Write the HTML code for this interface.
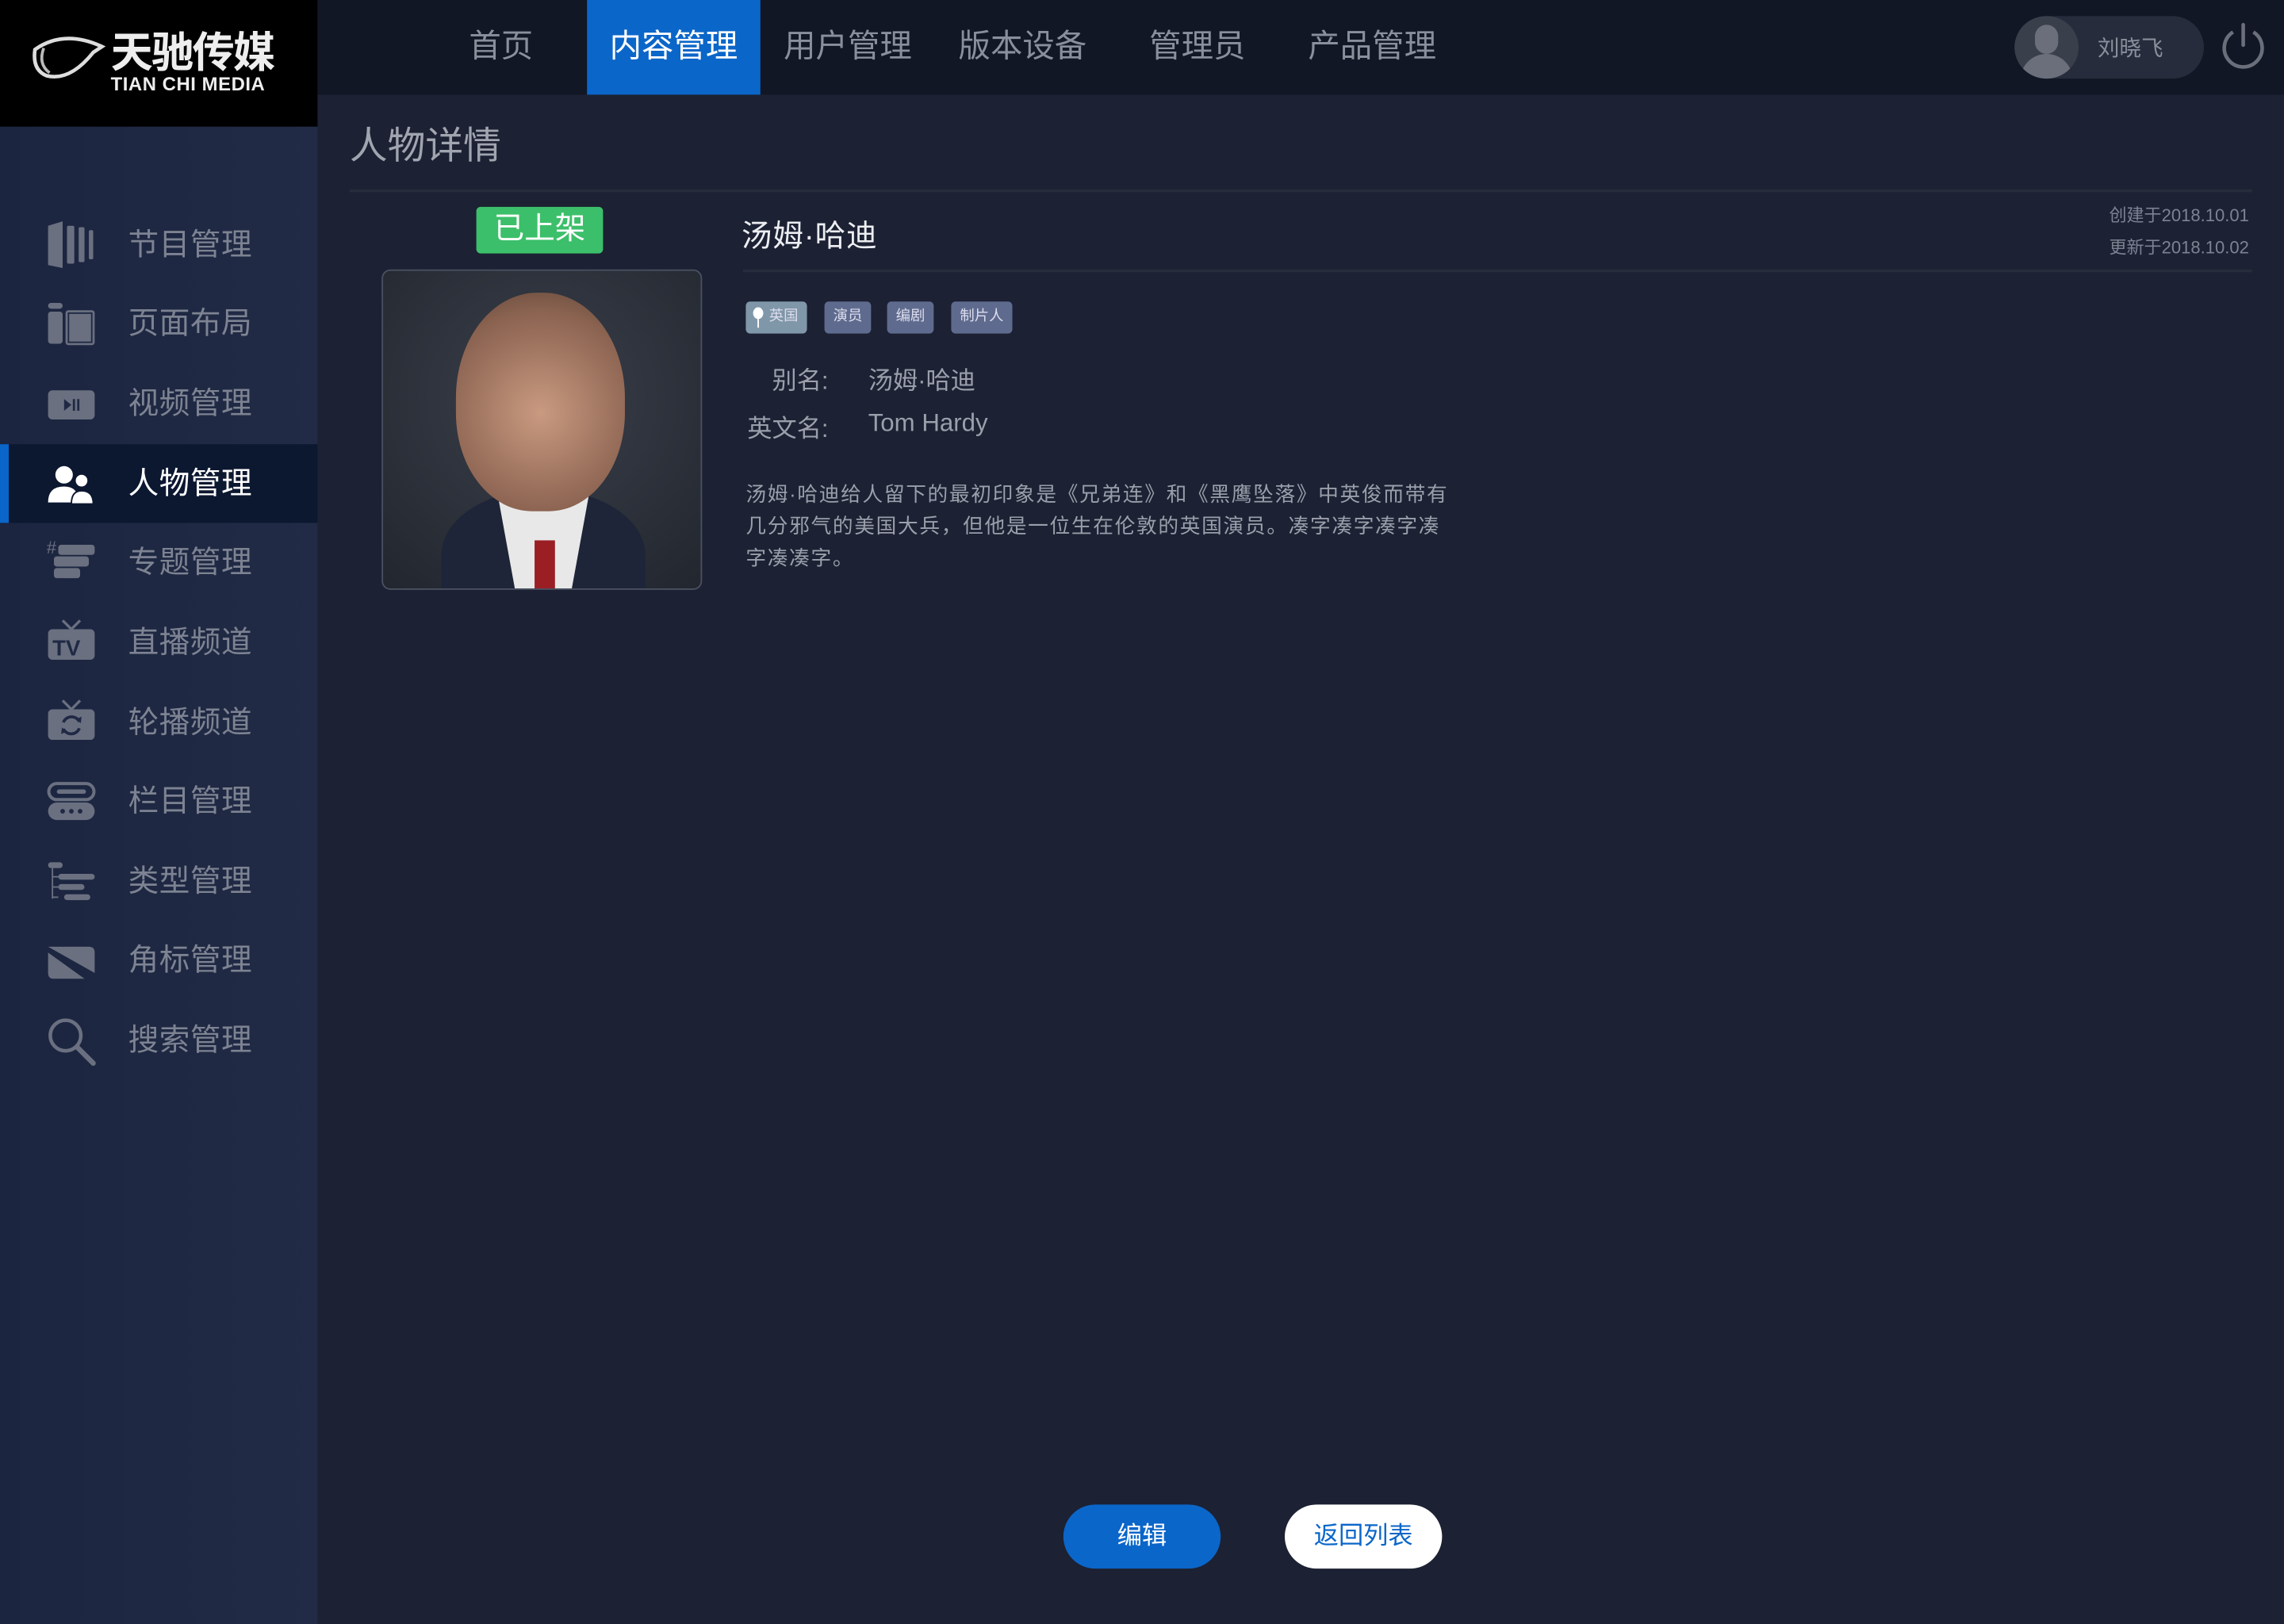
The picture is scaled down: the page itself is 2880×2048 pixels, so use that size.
<!DOCTYPE html>
<html><head><meta charset="utf-8"><style>
*{margin:0;padding:0;box-sizing:border-box}
html,body{width:2880px;height:2048px;overflow:hidden;background:#1c2133}
#w{position:absolute;left:0;top:0;width:1568px;height:1115px;transform:scale(1.836735);transform-origin:0 0;font-family:"Liberation Sans","Noto Sans CJK SC",sans-serif;background:#1c2133;color:#9a9fab}
.abs{position:absolute}
#logo{left:0;top:0;width:218px;height:87px;background:#000}
#side{left:0;top:87px;width:218px;height:1028px;background:linear-gradient(90deg,#1b2540,#212b45)}
#top{left:218px;top:0;width:1350px;height:65px;background:#111725}
.nav{position:absolute;top:0;height:65px;line-height:64px;font-size:22px;color:#8a8f9c;text-align:center}
.mi{position:absolute;left:0;width:218px;height:54px;}
.mi span{position:absolute;left:88px;top:11px;font-size:21px;color:#7d8392;letter-spacing:0.3px}
.mi svg{position:absolute;left:32px;top:10px}
.tag{position:absolute;top:207px;height:22px;border-radius:3px;background:#5f6b8e;color:#dde;font-size:10px;line-height:22px;padding:0 6px}
</style></head><body><div id="w">
<div id="logo" class="abs">
<svg class="abs" style="left:20px;top:22px" width="54" height="40" viewBox="0 0 54 40"><path d="M4 12 Q24 -2 50 10 L44 14 Q28 34 12 30 Q2 26 4 12Z" fill="none" stroke="#ddd" stroke-width="2.5"/><path d="M10 11 Q6 22 14 28" fill="none" stroke="#bbb" stroke-width="2"/></svg>
<div class="abs" style="left:76px;top:20px;color:#eee;font-size:29px;font-weight:bold;letter-spacing:-1px;line-height:34px">天驰传媒</div>
<div class="abs" style="left:76px;top:51px;color:#eee;font-size:13px;line-height:14px;letter-spacing:0.3px;font-weight:bold">TIAN CHI MEDIA</div>
</div>
<div id="side" class="abs">
<div class="mi" style="top:54px"><svg width="34" height="34" viewBox="0 0 34 34"><path d="M1 4 L11 1 V33 L1 31Z" fill="#6a7080"/><rect x="14" y="4" width="5" height="26" rx="1" fill="#6a7080"/><rect x="22" y="5" width="4" height="24" rx="1" fill="#6a7080"/><rect x="29" y="7" width="3" height="20" rx="1" fill="#6a7080"/></svg><span>节目管理</span></div>
<div class="mi" style="top:108px"><svg width="34" height="34" viewBox="0 0 34 34"><rect x="1" y="3" width="10" height="4" rx="2" fill="#6a7080"/><rect x="1" y="9" width="10" height="22" rx="2" fill="#6a7080"/><rect x="13" y="8" width="20" height="24" rx="2" fill="#6a7080"/><rect x="15" y="10" width="16" height="20" fill="none" stroke="#1f2944" stroke-width="1"/></svg><span>页面布局</span></div>
<div class="mi" style="top:163px"><svg width="34" height="34" viewBox="0 0 34 34"><rect x="1" y="8" width="32" height="20" rx="3" fill="#6a7080"/><path d="M12 14 L17 18 L12 22Z M18 14h1.5v8H18z M21 14h1.5v8H21z" fill="#1f2944"/></svg><span>视频管理</span></div>
<div class="mi" style="top:218px;background:#0c1730"><div class="abs" style="left:0;top:0;width:6px;height:54px;background:#0a66c8"></div><svg width="34" height="34" viewBox="0 0 34 34"><circle cx="12" cy="11" r="6" fill="#fff"/><path d="M1 30 Q1 19 12 19 Q22 19 22 30Z" fill="#fff"/><circle cx="24" cy="15" r="4.5" fill="#fff" stroke="#0c1730"/><path d="M17 31 Q17 22 24 22 Q32 22 32 31Z" fill="#fff" stroke="#0c1730"/></svg><span style="color:#fff">人物管理</span></div>
<div class="mi" style="top:272px"><svg width="34" height="34" viewBox="0 0 34 34"><text x="0" y="11" font-size="12" fill="#6a7080" font-family="Liberation Sans">#</text><rect x="8" y="5" width="25" height="7" rx="2" fill="#6a7080"/><rect x="5" y="13" width="24" height="7" rx="2" fill="#6a7080"/><rect x="5" y="21" width="18" height="7" rx="2" fill="#6a7080"/></svg><span>专题管理</span></div>
<div class="mi" style="top:327px"><svg width="34" height="34" viewBox="0 0 34 34"><path d="M11 2 L17 8 L23 2" stroke="#6a7080" stroke-width="1.8" fill="none"/><rect x="1" y="8" width="32" height="21" rx="3" fill="#6a7080"/><text x="4" y="26" font-size="15" font-weight="bold" fill="#1f2944" font-family="Liberation Sans">TV</text></svg><span>直播频道</span></div>
<div class="mi" style="top:382px"><svg width="34" height="34" viewBox="0 0 34 34"><path d="M11 2 L17 8 L23 2" stroke="#6a7080" stroke-width="1.8" fill="none"/><rect x="1" y="8" width="32" height="21" rx="3" fill="#6a7080"/><path d="M11.5 17 A6 6 0 0 1 22.5 16.5 M22.5 21 A6 6 0 0 1 11.5 21.5" fill="none" stroke="#1f2944" stroke-width="2"/><path d="M20 15 L23.5 17.5 L24 13Z M14 23 L10.5 20.5 L10 25Z" fill="#1f2944"/></svg><span>轮播频道</span></div>
<div class="mi" style="top:436px"><svg width="34" height="34" viewBox="0 0 34 34"><rect x="1.5" y="5" width="31" height="11" rx="5.5" fill="none" stroke="#6a7080" stroke-width="2.2"/><rect x="7" y="9" width="20" height="3" rx="1.5" fill="#6a7080"/><rect x="1" y="18" width="32" height="12" rx="6" fill="#6a7080"/><circle cx="11" cy="24" r="1.6" fill="#1f2944"/><circle cx="17" cy="24" r="1.6" fill="#1f2944"/><circle cx="23" cy="24" r="1.6" fill="#1f2944"/></svg><span>栏目管理</span></div>
<div class="mi" style="top:491px"><svg width="34" height="34" viewBox="0 0 34 34"><rect x="1" y="4" width="10" height="4" rx="2" fill="#6a7080"/><path d="M4 8 V29 M4 14 H8 M4 21 H8 M4 28 H8" stroke="#6a7080" stroke-width="1"/><rect x="8" y="12" width="25" height="4" rx="2" fill="#6a7080"/><rect x="8" y="19" width="18" height="4" rx="2" fill="#6a7080"/><rect x="12" y="26" width="18" height="4" rx="2" fill="#6a7080"/></svg><span>类型管理</span></div>
<div class="mi" style="top:545px"><svg width="34" height="34" viewBox="0 0 34 34"><path d="M1 8 H29 Q33 8 33 12 V26 Z" fill="#6a7080"/><path d="M1 12 L26 30 H5 Q1 30 1 26Z" fill="#6a7080"/></svg><span>角标管理</span></div>
<div class="mi" style="top:600px"><svg width="34" height="36" viewBox="0 0 34 36"><circle cx="13" cy="14" r="10.5" fill="none" stroke="#6a7080" stroke-width="2.5"/><path d="M21 22 L32 33" stroke="#6a7080" stroke-width="3.5" stroke-linecap="round"/></svg><span>搜索管理</span></div>
</div>
<div id="top" class="abs">
<div class="nav" style="left:96px;width:60px">首页</div>
<div class="nav" style="left:185px;width:119px;background:#0b66c9;color:#fff">内容管理</div>
<div class="nav" style="left:314px;width:100px">用户管理</div>
<div class="nav" style="left:434px;width:100px">版本设备</div>
<div class="nav" style="left:564px;width:80px">管理员</div>
<div class="nav" style="left:674px;width:100px">产品管理</div>
<div class="abs" style="left:1165px;top:11px;width:130px;height:43px;border-radius:22px;background:#262c3b"></div>
<div class="abs" style="left:1165px;top:11px;width:44px;height:43px;border-radius:50%;background:#3a3f4c;overflow:hidden"><div class="abs" style="left:14px;top:6px;width:16px;height:20px;border-radius:8px;background:#6a6f7b"></div><div class="abs" style="left:4px;top:26px;width:36px;height:24px;border-radius:18px 18px 0 0;background:#6a6f7b"></div></div>
<div class="abs" style="left:1222px;top:22px;font-size:15px;color:#8a8f9c">刘晓飞</div>
<svg class="abs" style="left:1305px;top:14px" width="34" height="36" viewBox="0 0 34 36"><path d="M10 8 A13 13 0 1 0 24 8" fill="none" stroke="#6a6f7b" stroke-width="2.5"/><path d="M17 3 V17" stroke="#6a6f7b" stroke-width="2.5" stroke-linecap="round"/></svg>
</div>
<div class="abs" style="left:240px;top:80px;font-size:26px;color:#a0a5b0">人物详情</div>
<div class="abs" style="left:240px;top:130px;width:1306px;height:2px;background:#262c3c"></div>
<div class="abs" style="left:327px;top:142px;width:87px;height:32px;background:#3cbf6a;border-radius:3px;color:#fff;font-size:21px;line-height:32px;text-align:center">已上架</div>
<div class="abs" style="left:262px;top:185px;width:220px;height:220px;border-radius:6px;border:1px solid #4a5060;overflow:hidden;background:radial-gradient(circle at 50% 40%,#3a3f4a,#22262e)">
<div class="abs" style="left:40px;top:150px;width:140px;height:90px;border-radius:50% 50% 0 0;background:#1f2538"></div>
<div class="abs" style="left:78px;top:150px;width:64px;height:70px;background:#e8e8e8;clip-path:polygon(0 0,100% 0,80% 100%,20% 100%)"></div>
<div class="abs" style="left:104px;top:185px;width:14px;height:35px;background:#9a1e24"></div>
<div class="abs" style="left:50px;top:15px;width:116px;height:150px;border-radius:48% 48% 45% 45%;background:radial-gradient(circle at 50% 55%,#c99a80,#8a6250 70%,#5a4438)"></div>
</div>
<div class="abs" style="left:509px;top:146px;font-size:21px;color:#eceef2;letter-spacing:0.5px">汤姆·哈迪</div>
<div class="abs" style="left:1380px;top:137px;width:164px;text-align:right;font-size:12px;line-height:22px;color:#7d8392">创建于2018.10.01<br>更新于2018.10.02</div>
<div class="abs" style="left:510px;top:185px;width:1036px;height:2px;background:#262c3c"></div>
<div class="tag" style="left:512px;background:#7f97a8;padding-left:16px">英国<div class="abs" style="left:5px;top:4px;width:7px;height:8px;border-radius:50%;background:#fff"></div><div class="abs" style="left:8px;top:10px;width:1px;height:8px;background:#fff"></div></div>
<div class="tag" style="left:566px">演员</div>
<div class="tag" style="left:609px">编剧</div>
<div class="tag" style="left:653px">制片人</div>
<div class="abs" style="left:530px;top:247px;font-size:17px;color:#9a9fab">别名:</div>
<div class="abs" style="left:596px;top:247px;font-size:17px;color:#9a9fab">汤姆·哈迪</div>
<div class="abs" style="left:513px;top:280px;font-size:17px;color:#9a9fab">英文名:</div>
<div class="abs" style="left:596px;top:281px;font-size:17px;color:#9a9fab">Tom Hardy</div>
<div class="abs" style="left:512px;top:328px;white-space:nowrap;font-size:14px;letter-spacing:0.9px;line-height:22px;color:#9a9fab">汤姆·哈迪给人留下的最初印象是《兄弟连》和《黑鹰坠落》中英俊而带有<br>几分邪气的美国大兵，但他是一位生在伦敦的英国演员。凑字凑字凑字凑<br>字凑凑字。</div>
<div class="abs" style="left:730px;top:1033px;width:108px;height:44px;border-radius:22px;background:#0b66c9;color:#fff;font-size:17px;line-height:44px;text-align:center">编辑</div>
<div class="abs" style="left:882px;top:1033px;width:108px;height:44px;border-radius:22px;background:#fff;color:#0b66c9;font-size:17px;line-height:44px;text-align:center">返回列表</div>
</div></body></html>
